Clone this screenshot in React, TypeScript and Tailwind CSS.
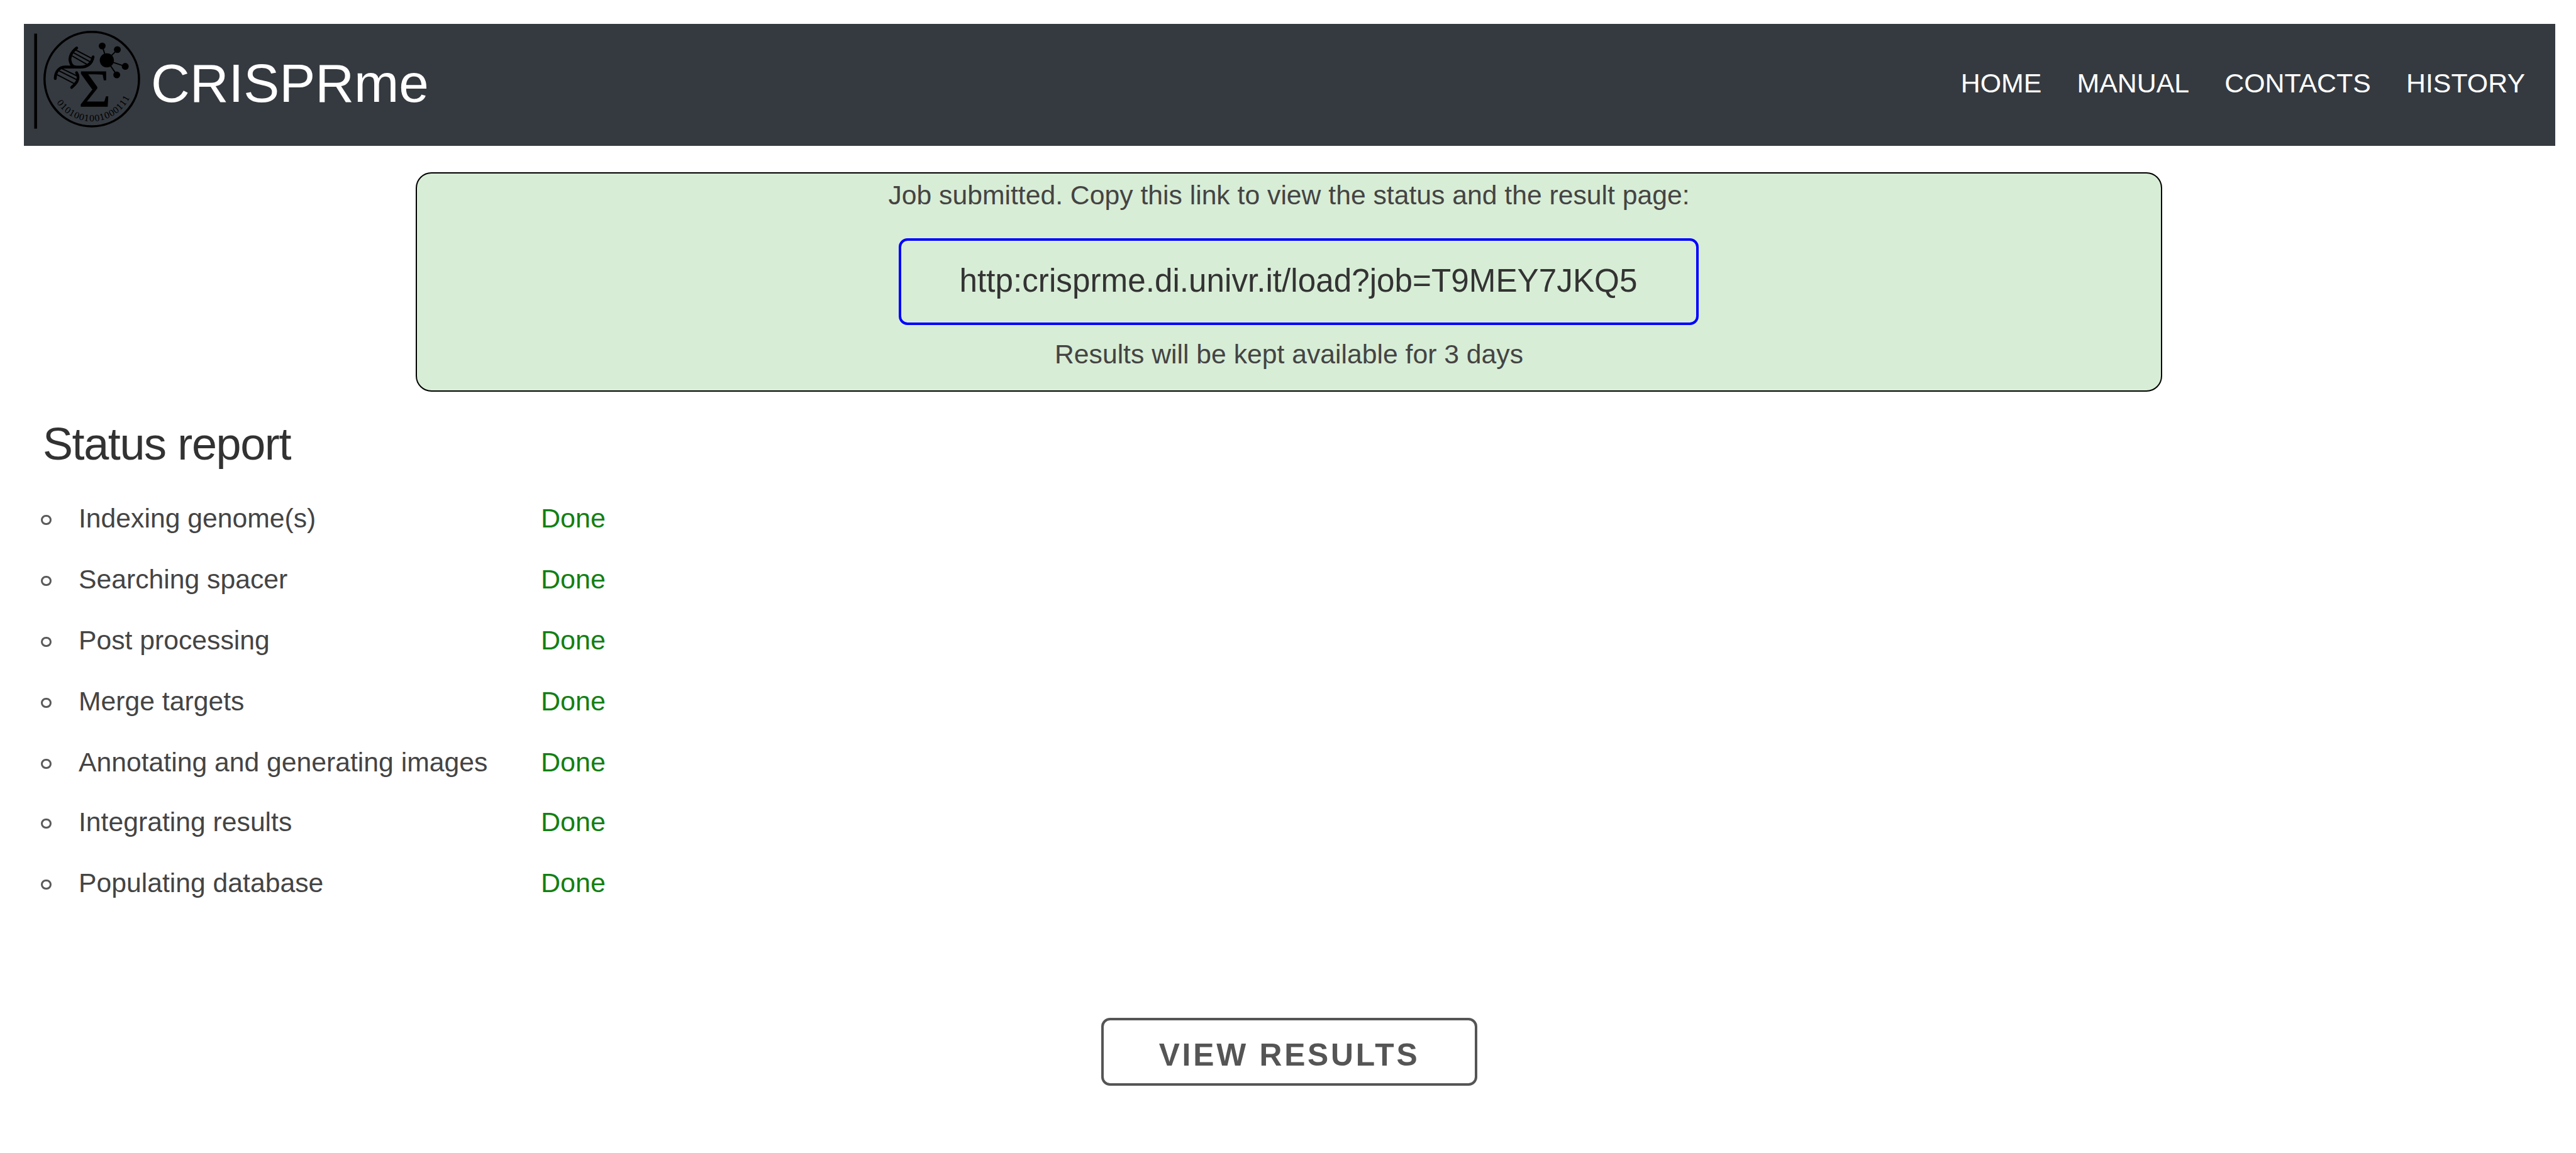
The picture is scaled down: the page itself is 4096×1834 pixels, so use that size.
import React from "react";

const links = ["HOME", "MANUAL", "CONTACTS", "HISTORY"];

const steps = [
  { label: "Indexing genome(s)", status: "Done" },
  { label: "Searching spacer", status: "Done" },
  { label: "Post processing", status: "Done" },
  { label: "Merge targets", status: "Done" },
  { label: "Annotating and generating images", status: "Done" },
  { label: "Integrating results", status: "Done" },
  { label: "Populating database", status: "Done" },
];

function Logo() {
  return (
    <svg viewBox="30 30 600 600" className="block h-[193px] w-[193px] shrink-0">
      <rect x="81" y="75" width="14" height="470" fill="#000" />
      <circle cx="365.5" cy="300" r="233.5" fill="none" stroke="#000" strokeWidth="11" />

      {/* double helix */}
      <g fill="none" stroke="#000" strokeWidth="14" strokeLinecap="round">
        <path d="M291 146 C262 168 253 196 260 216 C264 230 272 238 284 240" />
        <path d="M372 190 C366 222 347 240 308 241 L234 240 C204 241 186 262 185 297" />
        <path d="M290 268 C304 290 302 312 266 341" />
      </g>
      <g stroke="#000" strokeWidth="6">
        <path d="M284 155 L370 200" />
        <path d="M274 169 L362 217" />
        <path d="M266 184 L348 231" />
        <path d="M216 247 L298 287" />
        <path d="M202 258 L298 306" />
        <path d="M190 276 L284 325" />
      </g>

      {/* molecule */}
      <g stroke="#000" strokeWidth="6">
        <path d="M440 207 L417 136" />
        <path d="M440 207 L492 154" />
        <path d="M440 207 L531 237" />
        <path d="M440 207 L489 279" />
      </g>
      <circle cx="440" cy="207" r="35" />
      <circle cx="417" cy="136" r="17" />
      <circle cx="492" cy="154" r="17" />
      <circle cx="531" cy="237" r="17" />
      <circle cx="489" cy="279" r="17" />

      <text
        x="302"
        y="437"
        fontSize="260"
        textLength="157"
        lengthAdjust="spacingAndGlyphs"
        className="font-['Liberation_Serif',serif]"
        stroke="#000"
        strokeWidth="3"
      >
        Σ
      </text>

      <path id="logo-arc" d="M191.4 415.7 A209 209 0 0 0 553.7 391" fill="none" />
      <text fontSize="42" letterSpacing="0.8" className="font-['DejaVu_Serif',serif]" fill="#000">
        <textPath href="#logo-arc">0101001001000111</textPath>
      </text>
    </svg>
  );
}

export default function App() {
  return (
    <div className="flex h-[1834px] w-[4096px] flex-col overflow-hidden bg-white pt-[38px] font-['Liberation_Sans',Arial,sans-serif] text-[42.7px] leading-[64px] text-[#444444]">
      <header className="ml-[38px] flex h-[194px] w-[4025px] items-center bg-[#353a40] pr-[48px] text-white">
        <Logo />
        <span className="ml-[9px] pb-[5px] text-[85.5px] leading-[96px]">CRISPRme</span>
        <nav className="ml-auto flex gap-[56px] pb-[7px] text-[42.9px]">
          {links.map((link) => (
            <a key={link} href="#">
              {link}
            </a>
          ))}
        </nav>
      </header>

      <section className="mt-[42px] ml-[661px] flex h-[349px] w-[2777px] flex-col items-center rounded-[25px] border-2 border-black bg-[#d8edd6] pt-[2px]">
        <p>Job submitted. Copy this link to view the status and the result page:</p>
        <div className="mt-[37px] ml-[30px] flex h-[138px] w-[1272px] items-center justify-center rounded-[14px] border-4 border-[#0000ff] pb-[3px] text-[51.24px] text-[#333333]">
          http:crisprme.di.univr.it/load?job=T9MEY7JKQ5
        </div>
        <p className="mt-[14px]">Results will be kept available for 3 days</p>
      </section>

      <h3 className="mt-[43px] ml-[68px] text-[72px] leading-[80px] tracking-[-1.4px] text-[#323232]">
        Status report
      </h3>

      <ul className="mt-[46px] ml-[65px] flex flex-col gap-[33px]">
        {steps.map((step) => (
          <li key={step.label} className="flex h-[64px] items-center nth-6:-mt-[2px]">
            <span className="mt-[5px] h-[16px] w-[17px] rounded-full border-3 border-[#5a5a5a]" />
            <span className="ml-[43px] w-[735px]">{step.label}</span>
            <span className="text-[43px] text-[#128012]">{step.status}</span>
          </li>
        ))}
      </ul>

      <button className="mt-[183px] ml-[1751px] flex h-[108px] w-[598px] items-center justify-center rounded-[14px] border-4 border-[#555555] pt-[10px] text-[49.8px] font-bold tracking-[3.74px] text-[#555555]">
        VIEW RESULTS
      </button>
    </div>
  );
}
